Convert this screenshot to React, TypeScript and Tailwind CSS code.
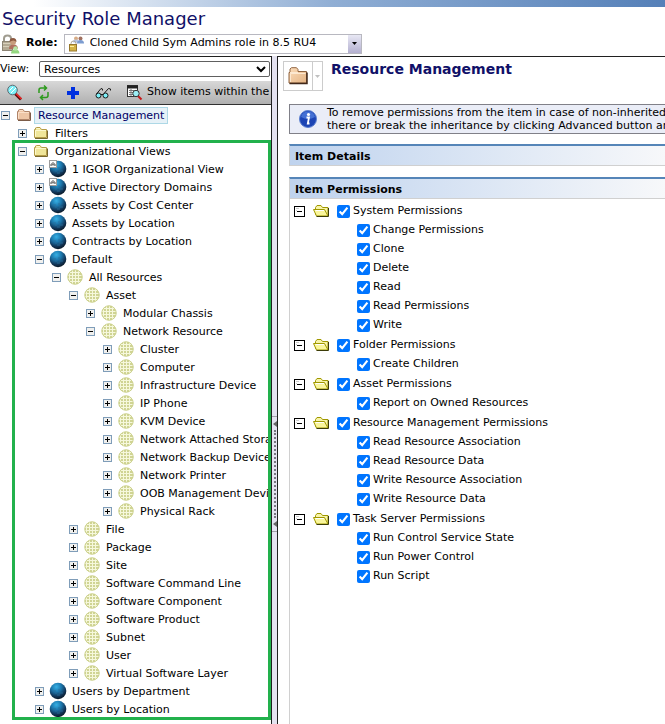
import React, { useState } from 'react';
import { clsx } from 'clsx';

type IconKind = 'peach' | 'folder' | 'view' | 'viewA' | 'class';

interface TreeNode {
  label: string;
  icon: IconKind;
  open?: boolean;
  children?: TreeNode[];
}

interface PermissionGroup {
  name: string;
  items: string[];
}

const leaf = (label: string, icon: IconKind = 'class'): TreeNode => ({ label, icon });

const filters = leaf('Filters', 'folder');

const organizationalViews: TreeNode = {
  label: 'Organizational Views',
  icon: 'folder',
  open: true,
  children: [
    leaf('1 IGOR Organizational View', 'viewA'),
    leaf('Active Directory Domains', 'viewA'),
    leaf('Assets by Cost Center', 'view'),
    leaf('Assets by Location', 'view'),
    leaf('Contracts by Location', 'view'),
    {
      label: 'Default',
      icon: 'view',
      open: true,
      children: [
        {
          label: 'All Resources',
          icon: 'class',
          open: true,
          children: [
            {
              label: 'Asset',
              icon: 'class',
              open: true,
              children: [
                leaf('Modular Chassis'),
                {
                  label: 'Network Resource',
                  icon: 'class',
                  open: true,
                  children: [
                    leaf('Cluster'),
                    leaf('Computer'),
                    leaf('Infrastructure Device'),
                    leaf('IP Phone'),
                    leaf('KVM Device'),
                    leaf('Network Attached Storage'),
                    leaf('Network Backup Device'),
                    leaf('Network Printer'),
                    leaf('OOB Management Device'),
                    leaf('Physical Rack'),
                  ],
                },
              ],
            },
            leaf('File'),
            leaf('Package'),
            leaf('Site'),
            leaf('Software Command Line'),
            leaf('Software Component'),
            leaf('Software Product'),
            leaf('Subnet'),
            leaf('User'),
            leaf('Virtual Software Layer'),
          ],
        },
      ],
    },
    leaf('Users by Department', 'view'),
    leaf('Users by Location', 'view'),
  ],
};

const permissionGroups: PermissionGroup[] = [
  { name: 'System Permissions', items: ['Change Permissions', 'Clone', 'Delete', 'Read', 'Read Permissions', 'Write'] },
  { name: 'Folder Permissions', items: ['Create Children'] },
  { name: 'Asset Permissions', items: ['Report on Owned Resources'] },
  {
    name: 'Resource Management Permissions',
    items: ['Read Resource Association', 'Read Resource Data', 'Write Resource Association', 'Write Resource Data'],
  },
  { name: 'Task Server Permissions', items: ['Run Control Service State', 'Run Power Control', 'Run Script'] },
];

function FolderIcon({ peach = false }: { peach?: boolean }) {
  return (
    <svg width="16" height="16" viewBox="0 0 16 16">
      <path
        d="M1.500 12.500V4.500H2.500V3L3.500 2.500H7L8.500 4.500H13.500V12.500z"
        fill={peach ? '#eec6a6' : '#f0e69a'}
        stroke={peach ? '#b08468' : '#b49c48'}
      />
      <path d="M3.500 3.500h3.500M2.500 11.500v-6h10.500" fill="none" stroke={peach ? '#fadfc8' : '#fcf8cc'} />
      <path d="M2 13.500h12.500V5.500" fill="none" stroke={peach ? '#7c5c48' : '#786830'} />
    </svg>
  );
}

function ViewIcon({ automatic = false }: { automatic?: boolean }) {
  return (
    <svg width="18" height="18" viewBox="0 0 18 18">
      <defs>
        <radialGradient id="viewBall" cx="0.4" cy="0.25" r="0.75">
          <stop offset="0" stopColor="#38b0e4" />
          <stop offset="0.4" stopColor="#1c78ae" />
          <stop offset="0.75" stopColor="#12385c" />
          <stop offset="1" stopColor="#0a1826" />
        </radialGradient>
      </defs>
      <circle cx="9" cy="9" r="8.300" fill="url(#viewBall)" />
      <path d="M4 9h3M9 8h2M6 11h2M10 11h4M8 13h3" stroke="#2c6c98" strokeWidth="0.800" />
      {automatic && (
        <>
          <rect x="0.500" y="0.500" width="7" height="7" fill="#fff" stroke="#9c9c9c" />
          <path d="M2 6V4.500L4 2.500l2 2V6M2.500 4.800h3" fill="none" stroke="#444" />
        </>
      )}
    </svg>
  );
}

function ClassIcon() {
  return (
    <svg width="16" height="16" viewBox="0 0 16 16">
      <circle cx="8" cy="8" r="7.500" fill="#d0d494" />
      <g fill="none" stroke="#f6f8dc">
        <path d="M3 3.500h10M1 6.500h14M1 9.500h14M3 12.500h10" />
        <path d="M5.500 1v14M8.500 1v14M11.500 1.500v13M2.500 4.500v7" />
      </g>
      <circle cx="8" cy="8" r="7.200" fill="none" stroke="#ccd08c" strokeWidth="0.800" />
    </svg>
  );
}

function NodeIcon({ kind }: { kind: IconKind }) {
  if (kind === 'peach') return <FolderIcon peach />;
  if (kind === 'folder') return <FolderIcon />;
  if (kind === 'class') return <ClassIcon />;
  return <ViewIcon automatic={kind === 'viewA'} />;
}

function OpenFolderIcon() {
  return (
    <svg width="17" height="14" viewBox="0 0 17 14">
      <path d="M2.500 9.500V2.500l1.500-2h4l1.500 2h5.500v8z" fill="#f8f4a8" stroke="#a09800" />
      <path d="M0.500 4.500h11l3.500 6.500H3.500z" fill="#faf69c" stroke="#a09800" />
      <path d="M2.500 5.500h8.500" stroke="#fff" />
      <path d="M3.500 11.500h12V3" fill="none" stroke="#3c3c08" />
    </svg>
  );
}

function Toggle({ open, label, onClick }: { open?: boolean; label: string; onClick?: () => void }) {
  return (
    <button type="button" aria-label={`Toggle ${label}`} onClick={onClick} className="shrink-0">
      <svg width="9" height="9" viewBox="0 0 9 9" className="block">
        <rect x="0.500" y="0.500" width="8" height="8" fill="#f0f0ee" stroke="#7f9db9" />
        <path d={open ? 'M2 4.500h5' : 'M2 4.500h5M4.500 2v5'} stroke="#000" />
      </svg>
    </button>
  );
}

function TreeRow({ node, open, selected, onToggle }: { node: TreeNode; open?: boolean; selected?: boolean; onToggle?: () => void }) {
  return (
    <div className="flex h-[18px] items-center whitespace-nowrap">
      <Toggle open={open} label={node.label} onClick={onToggle} />
      <span className="mr-px ml-[5px] flex w-[18px] shrink-0 justify-center">
        <NodeIcon kind={node.icon} />
      </span>
      <span
        className={clsx(
          'h-[17px] border px-[3px] leading-[15px]',
          selected ? 'border-[#add8e6] bg-[#e6f1f7] text-[#000066]' : 'border-transparent',
        )}
      >
        {node.label}
      </span>
    </div>
  );
}

function TreeItem({ node }: { node: TreeNode }) {
  const [open, setOpen] = useState(!!node.open);

  return (
    <li>
      <TreeRow node={node} open={open} onToggle={() => setOpen(!open)} />
      {open && node.children && (
        <ul className="pl-[17px]">
          {node.children.map((child) => (
            <TreeItem key={child.label} node={child} />
          ))}
        </ul>
      )}
    </li>
  );
}

function Toolbar() {
  return (
    <div className="flex h-6 items-center overflow-hidden whitespace-nowrap border-b border-[#303030] bg-linear-to-b from-[#d8d8d8] to-[#b0b0b0] pl-1.5">
      <button type="button" aria-label="Search" className="mr-3">
        <svg width="17" height="17" viewBox="0 0 17 17">
          <path d="M9 9.500l6 6" stroke="#5c0c0c" strokeWidth="3" />
          <path d="M9.500 9l6 6" stroke="#f02828" strokeWidth="1.500" />
          <circle cx="6.500" cy="6" r="4.800" fill="#7cf0f8" stroke="#606870" />
          <path d="M3.500 6.500L7 3M5 9l5-5" stroke="#fff" />
        </svg>
      </button>
      <button type="button" aria-label="Refresh" className="mr-3.5">
        <svg width="16" height="16" viewBox="0 0 16 16" fill="none" stroke="#2c9a1c" strokeWidth="1.500">
          <path d="M4 8V5q0-2 2-2h5M9 0.500L11.500 3 9 5.500M13 7v3.500q0 2-2 2H5.500M8 10L5.500 12.500 8 15" />
        </svg>
      </button>
      <button type="button" aria-label="Add" className="mr-3.5">
        <svg width="16" height="16" viewBox="0 0 16 16">
          <path d="M8 2v12M2 8h12" stroke="#0030e0" strokeWidth="4" />
        </svg>
      </button>
      <button type="button" aria-label="Preview" className="mr-3.5">
        <svg width="17" height="16" viewBox="0 0 17 16" fill="none" stroke="#181818">
          <circle cx="3.500" cy="10.500" r="2.500" fill="#7cf0f8" />
          <circle cx="10.500" cy="10.500" r="2.500" fill="#7cf0f8" />
          <path d="M6 9.500h2M1.500 9L6 3.500 7.500 4v1.500M9 8.500l4.500-5 2 .5v1.500" />
        </svg>
      </button>
      <button type="button" className="flex items-center">
        <svg width="17" height="17" viewBox="0 0 17 17" className="mr-1">
          <rect x="1.500" y="1.500" width="10" height="11" fill="#fff" stroke="#333" />
          <path d="M1 3h11" stroke="#222" strokeWidth="3" />
          <path d="M3 6.500h7M3 8.500h7M3 10.500h5M5 5v7" stroke="#777" />
          <path d="M11.500 11.500l4 4" stroke="#c81818" strokeWidth="2" />
          <circle cx="10" cy="9.500" r="3.200" fill="#9ceef4" stroke="#333" />
        </svg>
        Show items within the selected folder
      </button>
    </div>
  );
}

function SectionHeader({ title }: { title: string }) {
  return (
    <h3 className="h-[22px] border border-t-2 border-r-0 border-[#d0d0d0] border-t-[#5585b8] bg-linear-to-r from-[#bfd3ee] to-[#f7f8fa] pl-[5px] text-[11px] leading-[21px] font-bold">
      {title}
    </h3>
  );
}

function PermissionCheckbox({ label }: { label: string }) {
  return (
    <label className="flex items-center">
      <input type="checkbox" defaultChecked className="mr-[3px] size-[13px]" />
      {label}
    </label>
  );
}

function PermissionSection({ group }: { group: PermissionGroup }) {
  const [open, setOpen] = useState(true);

  return (
    <li className="mb-px">
      <div className="flex h-[19px] items-center">
        <button type="button" aria-label={`Toggle ${group.name}`} onClick={() => setOpen(!open)} className="mr-2">
          <svg width="11" height="11" viewBox="0 0 11 11" className="block">
            <rect x="0.500" y="0.500" width="10" height="10" fill="#fff" stroke="#000" />
            <path d="M2 2.500h3M2 4.500h1" stroke="#ccc" />
            <path d={open ? 'M3 5.500h5' : 'M3 5.500h5M5.500 3v5'} stroke="#000" />
          </svg>
        </button>
        <span className="mr-[7px]">
          <OpenFolderIcon />
        </span>
        <PermissionCheckbox label={group.name} />
      </div>
      {open && (
        <ul className="pl-[63px]">
          {group.items.map((item) => (
            <li key={item} className="flex h-[19px] items-center">
              <PermissionCheckbox label={item} />
            </li>
          ))}
        </ul>
      )}
    </li>
  );
}

function RoleBar() {
  return (
    <div className="flex h-[25px] items-center">
      <svg width="20" height="20" viewBox="0 0 20 20" className="mr-1.5">
        <path d="M4 8V4.500q0-3 3.500-3t3.500 3V8" fill="none" stroke="#a09c90" strokeWidth="2" />
        <rect x="2.500" y="7.500" width="10" height="9" fill="#b4aa94" stroke="#8c8474" />
        <path d="M3 9.500h8M3 12.500h6" stroke="#d8d0bc" />
        <path d="M9 15q0-4.500 4.500-4.500T18 15z" fill="#b07060" />
        <circle cx="13" cy="8" r="3" fill="#c89c7c" />
        <path d="M9.500 8q0-4 3.500-4t3.500 4q-3-3-7 0z" fill="#8c5840" />
        <path d="M11 19.500q0-4 4.200-4t4.300 4z" fill="#94d880" />
        <circle cx="15.500" cy="14.500" r="2.300" fill="#b4e4a4" />
      </svg>
      <label htmlFor="role" className="mr-1.5 font-bold">
        Role:
      </label>
      <div className="flex h-5 w-[298px] items-center border border-[#b8b8c0] bg-white pl-[3px]">
        <svg width="17" height="17" viewBox="0 0 17 17" className="shrink-0">
          <circle cx="8" cy="3.500" r="2" fill="#d8ac84" />
          <circle cx="12.500" cy="3.500" r="2" fill="#a07060" />
          <path d="M5 7.500q0-3 3-3t3 3z" fill="#b4c4e4" />
          <path d="M9 8.500q0-3.500 3.500-3.500T16 8.500z" fill="#7c9cd0" />
          <path d="M3 10V8.500q0-2.500 2.500-2.500T8 8.500V10" fill="none" stroke="#aaa494" />
          <rect x="1.500" y="9.500" width="7" height="6.500" fill="#d4b448" stroke="#98782c" />
          <path d="M2 11.500h4" stroke="#fff0a0" />
        </svg>
        <select id="role" className="ml-[5px] min-w-0 flex-1 appearance-none">
          <option>Cloned Child Sym Admins role in 8.5 RU4</option>
        </select>
        <span className="flex h-full w-[13px] items-center justify-center bg-linear-to-b from-[#e8e8f4] to-[#b4b0d0]">
          <svg width="5" height="3" viewBox="0 0 5 3">
            <path d="M0 0h5L2.500 3z" fill="#000" />
          </svg>
        </span>
      </div>
    </div>
  );
}

export default function App() {
  const [rootOpen, setRootOpen] = useState(true);

  return (
    <div className="flex min-h-screen flex-col overflow-hidden bg-white font-['Verdana','DejaVu_Sans',sans-serif] text-[11px] text-black">
      {/* Header */}
      <header>
        <div className="h-[7px] bg-linear-to-r from-white from-5% via-[#90aed4] via-50% to-[#5580b8]" />
        <h1 className="h-6 pl-0.5 text-[18px] leading-6 text-[#101068]">Security Role Manager</h1>
        <RoleBar />
      </header>

      <main className="flex flex-1">
        {/* Tree pane */}
        <section className="w-[272px] shrink-0 overflow-hidden border-t border-r border-[#202020]">
          <div className="flex h-6 items-center justify-between pr-px">
            <label htmlFor="view">View:</label>
            <select id="view" defaultValue="Resources" className="h-4 w-[231px] rounded-xs border border-[#606060] bg-white">
              <option>Resources</option>
            </select>
          </div>
          <Toolbar />
          <div className="pt-px pl-px">
            <TreeRow
              node={{ label: 'Resource Management', icon: 'peach' }}
              open={rootOpen}
              selected
              onToggle={() => setRootOpen(!rootOpen)}
            />
            {rootOpen && (
              <>
                <ul className="pl-[17px]">
                  <TreeItem node={filters} />
                </ul>
                <div className="relative pb-0.5 pl-[17px]">
                  <ul>
                    <TreeItem node={organizationalViews} />
                  </ul>
                  <div className="pointer-events-none absolute -top-0.5 right-0 bottom-0 left-[11px] border-3 border-[#22b14c]" />
                </div>
              </>
            )}
          </div>
        </section>

        {/* Splitter */}
        <div className="w-[5px] shrink-0 bg-[#e4e2f0]">
          <div className="mt-[360px] flex h-[116px] flex-col items-center justify-between border-y border-[#a0a0a8] py-1">
            <svg width="4" height="6" viewBox="0 0 4 6">
              <path d="M4 0v6L0 3z" fill="#666" />
            </svg>
            <div className="h-[88px] border-l-2 border-dotted border-[#77777f]" />
            <svg width="4" height="6" viewBox="0 0 4 6">
              <path d="M4 0v6L0 3z" fill="#666" />
            </svg>
          </div>
        </div>

        {/* Permissions pane */}
        <section className="flex min-w-0 flex-1 flex-col overflow-hidden border-t border-l border-[#202020]">
          <div className="flex h-[47px] items-start pt-1 pl-[5px]">
            <button type="button" aria-label="Item actions" className="flex h-[30px] w-10 border border-[#cccccc]">
              <span className="flex h-full flex-1 items-center justify-center">
                <svg width="21" height="18" viewBox="0 0 21 18">
                  <defs>
                    <linearGradient id="folderFace" x1="0" y1="0" x2="1" y2="1">
                      <stop offset="0" stopColor="#fbdcba" />
                      <stop offset="1" stopColor="#e4b484" />
                    </linearGradient>
                  </defs>
                  <path
                    d="M1 16V5.500h1V2L3.500 0.700h5L10 2.500v2h8.500V16z"
                    fill="url(#folderFace)"
                    stroke="#906440"
                  />
                  <path d="M2 5.500h8M2.500 15V6.500h15" fill="none" stroke="#fce8d0" />
                  <path d="M1.500 16.500h17.500V5.500" fill="none" stroke="#40281a" strokeWidth="1.500" />
                </svg>
              </span>
              <span className="flex h-full w-2.5 items-center justify-center border-l border-[#cccccc]">
                <svg width="5" height="3" viewBox="0 0 5 3">
                  <path d="M0 0h5L2.500 3z" fill="#c0c0c0" />
                </svg>
              </span>
            </button>
            <h2 className="pl-2 text-[14px] leading-4 font-bold text-[#101068]">Resource Management</h2>
          </div>

          <div className="flex flex-1 flex-col pl-[11px]">
            <div className="flex h-[30px] items-center whitespace-nowrap border border-r-0 border-[#808088] bg-[#eaedf7] pl-[9px]">
              <svg width="18" height="18" viewBox="0 0 18 18" className="mr-2.5 shrink-0">
                <circle cx="9" cy="9" r="8.500" fill="#1c44b4" stroke="#5c80d0" />
                <path d="M2 7a7.200 7.200 0 0 1 14 0q-7 4-14 0z" fill="#4470d4" />
                <circle cx="9.500" cy="4.500" r="1.600" fill="#fff" />
                <path d="M7.500 7.500h2.500L8.800 13.500h1.700" fill="none" stroke="#fff" strokeWidth="1.800" />
              </svg>
              <p className="leading-[13px]">
                To remove permissions from the item in case of non-inherited permissions, clear the check boxes
                <br />
                there or break the inheritance by clicking Advanced button and remove the permissions
              </p>
            </div>
            <div className="mt-2.5 mb-[11px]">
              <SectionHeader title="Item Details" />
            </div>
            <SectionHeader title="Item Permissions" />
            <ul className="flex-1 border-l border-[#d0d0d0] pt-[3px] pl-1">
              {permissionGroups.map((group) => (
                <PermissionSection key={group.name} group={group} />
              ))}
            </ul>
          </div>
        </section>
      </main>
    </div>
  );
}
